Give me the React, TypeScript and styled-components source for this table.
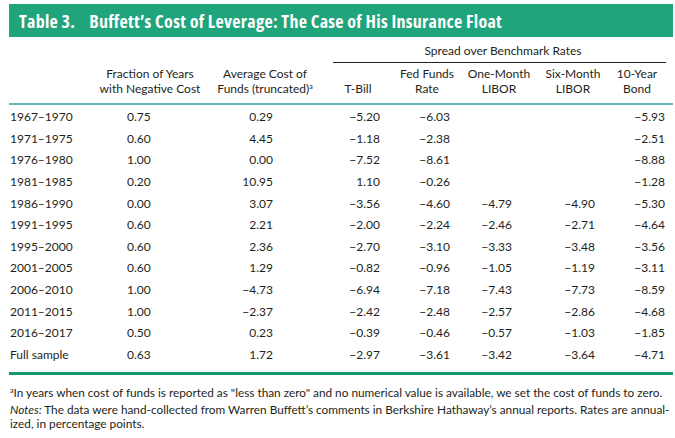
import React from "react";
import styled, { createGlobalStyle } from "styled-components";

const Global = createGlobalStyle`
  html, body { margin: 0; padding: 0; background: #ffffff; }
  body { font-family: Lato, "Open Sans", Arial, sans-serif; color: #231f20; }
`;

const Page = styled.div`
  width: 664px;
  padding: 4px 0 0 9px;
`;

const TitleBar = styled.div`
  height: 33px;
  background: #1fa47b;
  display: flex;
  align-items: center;
  gap: 14px;
  padding-left: 10px;
  color: #ffffff;
  font-family: "Open Sans", Lato, sans-serif;
  font-weight: 700;
  font-size: 18px;
  font-stretch: 75%;
  letter-spacing: 0.28px;
  white-space: nowrap;
`;

const Table = styled.div`
  padding-left: 1px;
  font-size: 12px;
`;

const COLS = "84px 114px 116px 70px 68px 76px 72px 56px";

const GroupRow = styled.div`
  display: grid;
  grid-template-columns: ${COLS};
  padding-top: 5.5px;
`;

const GroupHead = styled.div`
  grid-column: 4 / span 5;
  margin-left: 9px;
  padding: 0 0 4.5px 7px;
  line-height: 15px;
  text-align: center;
  border-bottom: 1px solid #231f20;
`;

const HeadRow = styled.div`
  display: grid;
  grid-template-columns: ${COLS};
  align-items: end;
  padding: 2.5px 0 7.5px;
  border-bottom: 2px solid #5fbcb0;
  margin-left: -1px;
`;

const HeadCell = styled.div`
  text-align: center;
  line-height: 15px;
  white-space: nowrap;
`;

const Body = styled.div`
  padding-top: 1px;
`;

const Row = styled.div`
  display: grid;
  grid-template-columns: ${COLS};
  height: 21.6px;
  align-items: center;
  line-height: 15px;
`;

const Label = styled.div`
  white-space: nowrap;
`;

const Num = styled.div<{ $pl?: number; $pr?: number; $left?: boolean }>`
  text-align: ${(p) => (p.$left ? "left" : "right")};
  padding-left: ${(p) => p.$pl ?? 0}px;
  padding-right: ${(p) => p.$pr ?? 0}px;
  white-space: nowrap;
`;

const BottomRule = styled.div`
  margin-top: 6.5px;
  height: 3px;
  background: #179a6e;
`;

const Footnote = styled.p`
  margin: 11px 0 0 1px;
  font-size: 11.8px;
  line-height: 14px;
  white-space: nowrap;
`;

const Notes = styled.p`
  margin: 3px 0 0 1px;
  width: 660px;
  font-size: 11.8px;
  line-height: 14px;
`;

const Sup = styled.sup`
  font-size: 7px;
  line-height: 0;
  vertical-align: 4px;
`;

type R = [string, string, string, string, string, string, string, string];

const rows: R[] = [
  ["1967–1970", "0.75", "0.29", "−5.20", "−6.03", "", "", "−5.93"],
  ["1971–1975", "0.60", "4.45", "−1.18", "−2.38", "", "", "−2.51"],
  ["1976–1980", "1.00", "0.00", "−7.52", "−8.61", "", "", "−8.88"],
  ["1981–1985", "0.20", "10.95", "1.10", "−0.26", "", "", "−1.28"],
  ["1986–1990", "0.00", "3.07", "−3.56", "−4.60", "−4.79", "−4.90", "−5.30"],
  ["1991–1995", "0.60", "2.21", "−2.00", "−2.24", "−2.46", "−2.71", "−4.64"],
  ["1995–2000", "0.60", "2.36", "−2.70", "−3.10", "−3.33", "−3.48", "−3.56"],
  ["2001–2005", "0.60", "1.29", "−0.82", "−0.96", "−1.05", "−1.19", "−3.11"],
  ["2006–2010", "1.00", "−4.73", "−6.94", "−7.18", "−7.43", "−7.73", "−8.59"],
  ["2011–2015", "1.00", "−2.37", "−2.42", "−2.48", "−2.57", "−2.86", "−4.68"],
  ["2016–2017", "0.50", "0.23", "−0.39", "−0.46", "−0.57", "−1.03", "−1.85"],
  ["Full sample", "0.63", "1.72", "−2.97", "−3.61", "−3.42", "−3.64", "−4.71"],
];

const rightPads = [0, 0, 51, 14, 12, 26, 15, 1];

export default function App() {
  return (
    <>
      <Global />
      <Page>
        <TitleBar>
          <span>Table 3.</span>
          <span>Buffett’s Cost of Leverage: The Case of His Insurance Float</span>
        </TitleBar>
        <Table>
          <GroupRow>
            <GroupHead>Spread over Benchmark Rates</GroupHead>
          </GroupRow>
          <HeadRow>
            <HeadCell />
            <HeadCell>
              Fraction of Years
              <br />
              with Negative Cost
            </HeadCell>
            <HeadCell>
              Average Cost of
              <br />
              Funds (truncated)<Sup>a</Sup>
            </HeadCell>
            <HeadCell>T-Bill</HeadCell>
            <HeadCell>
              Fed Funds
              <br />
              Rate
            </HeadCell>
            <HeadCell>
              One-Month
              <br />
              LIBOR
            </HeadCell>
            <HeadCell>
              Six-Month
              <br />
              LIBOR
            </HeadCell>
            <HeadCell>
              10-Year
              <br />
              Bond
            </HeadCell>
          </HeadRow>
          <Body>
            {rows.map((r) => (
              <Row key={r[0]}>
                <Label>{r[0]}</Label>
                <Num $left $pl={33}>
                  {r[1]}
                </Num>
                {r.slice(2).map((v, i) => (
                  <Num key={i} $pr={rightPads[i + 2]}>
                    {v}
                  </Num>
                ))}
              </Row>
            ))}
          </Body>
        </Table>
        <BottomRule />
        <Footnote>
          <Sup>a</Sup>In years when cost of funds is reported as "less than zero" and no numerical value is
          available, we set the cost of funds to zero.
        </Footnote>
        <Notes>
          <i>Notes:</i> The data were hand-collected from Warren Buffett’s comments in Berkshire Hathaway’s
          annual reports. Rates are annual-
          <br />
          ized, in percentage points.
        </Notes>
      </Page>
    </>
  );
}
